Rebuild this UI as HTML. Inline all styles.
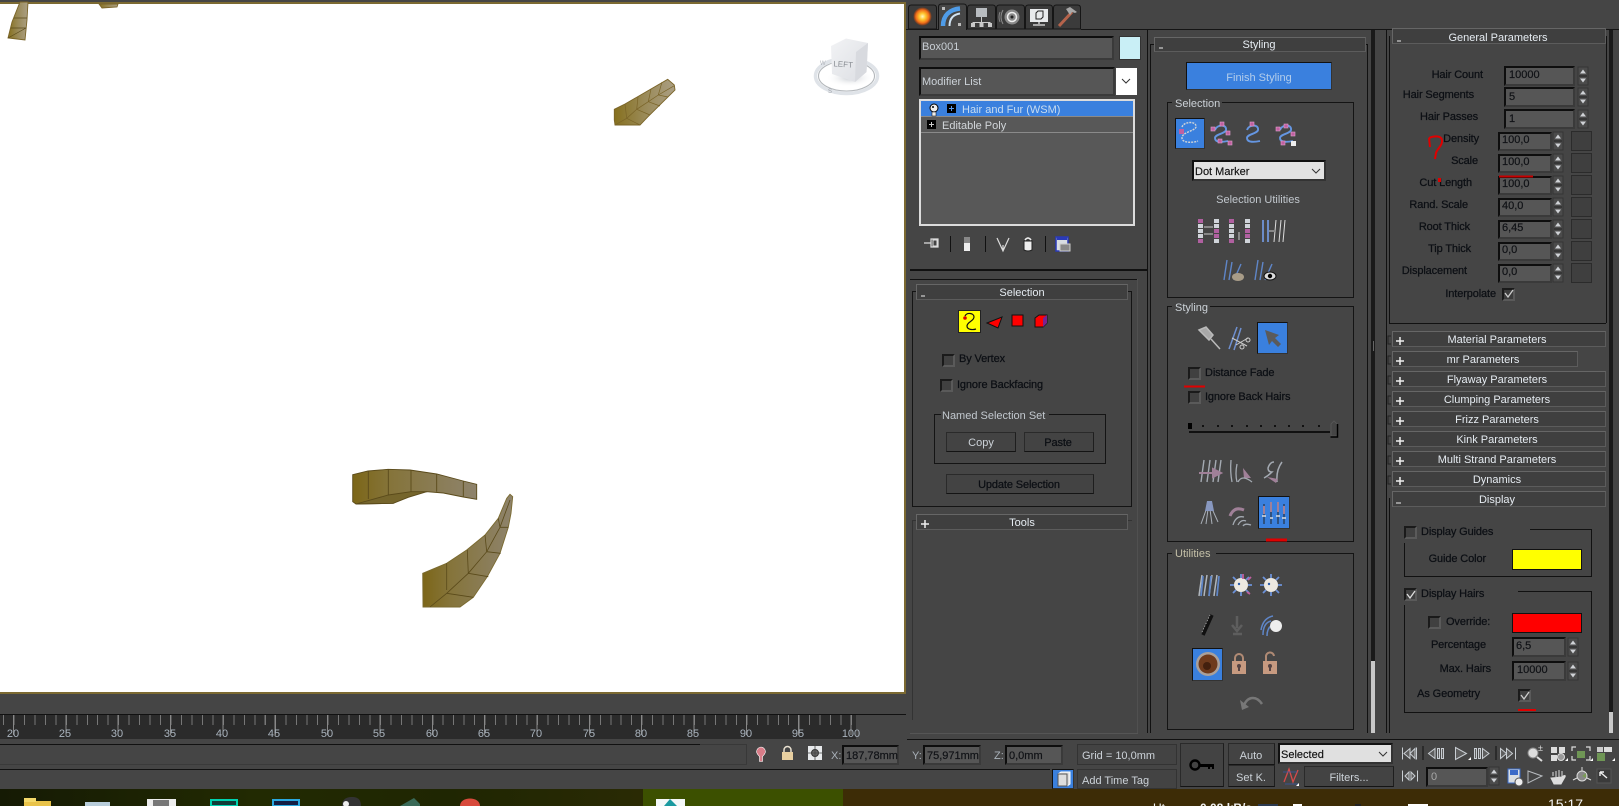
<!DOCTYPE html>
<html><head><meta charset="utf-8"><title>3ds Max</title>
<style>
html,body{margin:0;padding:0;background:#454545;}
#p{position:relative;width:1619px;height:806px;overflow:hidden;background:#454545;font-family:"Liberation Sans",sans-serif;}
#p div{position:absolute;box-sizing:border-box;}
.f{background:#565656;border:2px solid;border-color:#0e0e0e #3a3a3a #3a3a3a #0e0e0e;}
.hd{background:#3f3f3f;border:1px solid #5c5c5c;border-left-color:#666;border-top-color:#666;}
.g{border:1px solid #141414;}
.b{background:#434343;border:1px solid;border-color:#2a2a2a #1e1e1e #141414 #2a2a2a;}
.bt{background:#3f3f3f;border:1px solid #2b2b2b;}
.blue{background:#3a80de;border:1px solid;border-color:#111 #333 #333 #111;}
.ck{width:13px;height:13px;background:#404040;border:2px solid;border-color:#1a1a1a #5a5a5a #5a5a5a #1a1a1a;}
svg{position:absolute;left:0;top:0;}
text{font-family:"Liberation Sans",sans-serif;font-size:11px;}
.d{fill:#0c0f14;stroke:#0c0f14;stroke-width:.25px;letter-spacing:-.12px}
.l{fill:#ccd2d8}.h{fill:#e6ecf2}
.v{fill:#101216;stroke:#101216;stroke-width:.2px}
.e{text-anchor:end}.m{text-anchor:middle}
</style></head><body><div id="p">

<!-- viewport -->
<div style="left:0;top:2px;width:906px;height:692px;background:#fff;border-top:2px solid #7c6a32;border-right:2px solid #7c6a32;border-bottom:2px solid #7c6a32;"></div>

<!-- timeline -->
<div style="left:0;top:714px;width:906px;height:1px;background:#111;"></div>
<div style="left:0;top:715px;width:856px;height:24px;background:#2b2b2b;"></div>
<div style="left:0;top:715px;width:856px;height:10px;background:repeating-linear-gradient(90deg,#777 0,#777 1px,transparent 1px,transparent 10.47px);background-position:3px 0;"></div>
<div style="left:0;top:715px;width:856px;height:20px;background:repeating-linear-gradient(90deg,#888 0,#888 1px,transparent 1px,transparent 52.35px);background-position:13px 0;"></div>

<!-- status bars -->
<div style="left:0;top:744px;width:700px;height:1px;background:#111;"></div>
<div style="left:700px;top:744px;width:47px;height:21px;border:1px solid #383838;border-left:0;"></div>
<div style="left:0;top:764px;width:747px;height:1px;background:#3a3a3a;"></div>
<div style="left:0;top:769px;width:1050px;height:1px;background:#111;"></div>
<div style="left:907px;top:739px;width:712px;height:1px;background:#111;"></div>
<div style="left:910px;top:733px;width:228px;height:1px;background:#555;"></div>
<div class="f" style="left:842px;top:745px;width:57px;height:20px;"></div>
<div class="f" style="left:923px;top:745px;width:58px;height:20px;"></div>
<div class="f" style="left:1005px;top:745px;width:58px;height:20px;"></div>
<div class="b" style="left:1077px;top:744px;width:100px;height:21px;border-color:#333;"></div>
<div class="b" style="left:1077px;top:769px;width:100px;height:20px;border-color:#333;"></div>
<div class="blue" style="left:1052px;top:769px;width:22px;height:20px;"></div>
<div class="b" style="left:1180px;top:743px;width:44px;height:44px;"></div>
<div class="b" style="left:1228px;top:743px;width:47px;height:22px;"></div>
<div class="b" style="left:1228px;top:765px;width:47px;height:22px;"></div>
<div style="left:1278px;top:743px;width:115px;height:21px;background:#e0e0e0;border:2px solid #111;border-right-color:#333;border-bottom-color:#333;"></div>
<div class="b" style="left:1304px;top:766px;width:90px;height:21px;"></div>
<div class="f" style="left:1426px;top:767px;width:62px;height:20px;"></div>

<!-- taskbar -->
<div style="left:0;top:789px;width:643px;height:17px;background:linear-gradient(90deg,#151a04,#222a02 40%,#1f2602 70%,#2a2a04);"></div>
<div style="left:643px;top:789px;width:200px;height:17px;background:#3c5000;"></div>
<div style="left:843px;top:789px;width:776px;height:17px;background:#3d2c06;"></div>

<!-- tab strip line -->
<div style="left:1081px;top:29px;width:538px;height:1px;background:#141414;"></div>
<div style="left:906px;top:29px;width:32px;height:1px;background:#141414;"></div>

<!-- panel 0: name/modifier -->
<div class="f" style="left:919px;top:36px;width:195px;height:24px;"></div>
<div style="left:1119px;top:36px;width:22px;height:24px;background:#c9eff6;border:1px solid #333;"></div>
<div class="f" style="left:919px;top:67px;width:196px;height:29px;"></div>
<div style="left:1116px;top:68px;width:21px;height:27px;background:#fff;"></div>
<div style="left:919px;top:99px;width:216px;height:127px;background:#585858;border:2px solid #dcdcdc;"></div>
<div style="left:921px;top:101px;width:212px;height:16px;background:#3a80de;"></div>
<div style="left:921px;top:116px;width:212px;height:1px;background:#8a8a8a;"></div>
<div style="left:921px;top:132px;width:212px;height:1px;background:#8a8a8a;"></div>
<div style="left:950px;top:236px;width:1px;height:16px;background:#111;"></div>
<div style="left:985px;top:236px;width:1px;height:16px;background:#111;"></div>
<div style="left:1045px;top:236px;width:1px;height:16px;background:#111;"></div>
<div style="left:910px;top:269px;width:237px;height:2px;background:#111;"></div>
<div style="left:910px;top:279px;width:228px;height:1px;background:#111;"></div>
<div style="left:1137px;top:279px;width:1px;height:454px;background:#505050;"></div>

<!-- Selection rollout (left) -->
<div class="g" style="left:912px;top:291px;width:220px;height:216px;"></div>
<div class="hd" style="left:916px;top:284px;width:212px;height:16px;"></div>
<div style="left:958px;top:310px;width:23px;height:23px;background:#ffff00;border:1px solid #222;"></div>
<div class="ck" style="left:942px;top:354px;"></div>
<div class="ck" style="left:940px;top:379px;"></div>
<div class="g" style="left:934px;top:414px;width:172px;height:50px;"></div>
<div style="left:941px;top:410px;width:108px;height:8px;background:#454545;"></div>
<div class="b" style="left:946px;top:432px;width:70px;height:20px;"></div>
<div class="b" style="left:1024px;top:432px;width:70px;height:20px;"></div>
<div class="b" style="left:946px;top:474px;width:148px;height:20px;"></div>
<div class="g" style="left:912px;top:520px;width:220px;height:200px;border-bottom:0;border-right:0;border-color:#333;"></div>
<div class="hd" style="left:916px;top:514px;width:212px;height:16px;"></div>

<!-- panel 2: Styling -->
<div style="left:1147px;top:30px;width:1px;height:703px;background:#111;"></div>
<div style="left:1150px;top:44px;width:1px;height:689px;background:#111;"></div>
<div style="left:1150px;top:44px;width:218px;height:1px;background:#111;"></div>
<div style="left:1367px;top:44px;width:1px;height:689px;background:#111;"></div>
<div class="hd" style="left:1154px;top:37px;width:212px;height:15px;"></div>
<div class="blue" style="left:1186px;top:62px;width:146px;height:28px;"></div>

<div class="g" style="left:1167px;top:102px;width:187px;height:196px;"></div>
<div style="left:1172px;top:98px;width:50px;height:8px;background:#454545;"></div>
<div class="blue" style="left:1175px;top:118px;width:30px;height:31px;"></div>
<div style="left:1192px;top:160px;width:134px;height:21px;background:#e2e2e2;border:2px solid #111;border-right-color:#333;border-bottom-color:#333;"></div>

<div class="g" style="left:1167px;top:306px;width:187px;height:236px;"></div>
<div style="left:1172px;top:302px;width:38px;height:8px;background:#454545;"></div>
<div class="blue" style="left:1257px;top:322px;width:31px;height:32px;"></div>
<div class="ck" style="left:1188px;top:367px;"></div>
<div class="ck" style="left:1188px;top:391px;"></div>
<div class="blue" style="left:1258px;top:496px;width:32px;height:33px;"></div>

<div class="g" style="left:1167px;top:553px;width:187px;height:177px;"></div>
<div style="left:1172px;top:549px;width:44px;height:8px;background:#454545;"></div>
<div class="blue" style="left:1192px;top:648px;width:31px;height:33px;"></div>

<!-- scrollbars -->
<div style="left:1371px;top:30px;width:4px;height:631px;background:#1a1a1a;"></div>
<div style="left:1371px;top:661px;width:4px;height:72px;background:#c8c8c8;"></div>
<div style="left:1609px;top:30px;width:4px;height:682px;background:#1a1a1a;"></div>
<div style="left:1609px;top:712px;width:4px;height:21px;background:#c8c8c8;"></div>

<!-- panel 3 -->
<div style="left:1386px;top:30px;width:1px;height:703px;background:#111;"></div>
<div style="left:1389px;top:36px;width:1px;height:287px;background:#111;"></div>
<div style="left:1389px;top:323px;width:217px;height:1px;background:#111;"></div>
<div style="left:1606px;top:36px;width:1px;height:287px;background:#111;"></div>
<div class="hd" style="left:1392px;top:28px;width:214px;height:16px;"></div>
<div class="f" style="left:1504px;top:66px;width:71px;height:20px;"></div>
<div class="f" style="left:1504px;top:87px;width:71px;height:20px;"></div>
<div class="f" style="left:1504px;top:109px;width:71px;height:20px;"></div>
<div class="f" style="left:1498px;top:132px;width:54px;height:19px;"></div>
<div class="f" style="left:1498px;top:154px;width:54px;height:19px;"></div>
<div class="f" style="left:1498px;top:176px;width:54px;height:19px;"></div>
<div class="f" style="left:1498px;top:198px;width:54px;height:19px;"></div>
<div class="f" style="left:1498px;top:220px;width:54px;height:19px;"></div>
<div class="f" style="left:1498px;top:242px;width:54px;height:19px;"></div>
<div class="f" style="left:1498px;top:264px;width:54px;height:19px;"></div>
<div class="bt" style="left:1571px;top:131px;width:21px;height:20px;"></div>
<div class="bt" style="left:1571px;top:153px;width:21px;height:20px;"></div>
<div class="bt" style="left:1571px;top:175px;width:21px;height:20px;"></div>
<div class="bt" style="left:1571px;top:197px;width:21px;height:20px;"></div>
<div class="bt" style="left:1571px;top:219px;width:21px;height:20px;"></div>
<div class="bt" style="left:1571px;top:241px;width:21px;height:20px;"></div>
<div class="bt" style="left:1571px;top:263px;width:21px;height:20px;"></div>
<div class="ck" style="left:1502px;top:288px;background:#3c3c3c;"></div>

<div class="hd" style="left:1392px;top:331px;width:214px;height:16px;"></div>
<div class="hd" style="left:1392px;top:351px;width:186px;height:16px;"></div>
<div class="hd" style="left:1392px;top:371px;width:214px;height:16px;"></div>
<div class="hd" style="left:1392px;top:391px;width:214px;height:16px;"></div>
<div class="hd" style="left:1392px;top:411px;width:214px;height:16px;"></div>
<div class="hd" style="left:1392px;top:431px;width:214px;height:16px;"></div>
<div class="hd" style="left:1392px;top:451px;width:214px;height:16px;"></div>
<div class="hd" style="left:1392px;top:471px;width:214px;height:16px;"></div>
<div class="hd" style="left:1392px;top:491px;width:214px;height:16px;"></div>
<div style="left:1389px;top:498px;width:1px;height:235px;background:#111;"></div>

<div class="ck" style="left:1404px;top:526px;"></div>
<div style="left:1530px;top:529px;width:62px;height:1px;background:#111;"></div>
<div style="left:1404px;top:543px;width:1px;height:34px;background:#111;"></div>
<div style="left:1404px;top:576px;width:188px;height:1px;background:#111;"></div>
<div style="left:1591px;top:529px;width:1px;height:48px;background:#111;"></div>
<div style="left:1512px;top:549px;width:70px;height:21px;background:#ffff00;border:1px solid #111;"></div>
<div class="ck" style="left:1404px;top:588px;"></div>
<div style="left:1518px;top:591px;width:74px;height:1px;background:#111;"></div>
<div style="left:1404px;top:605px;width:1px;height:107px;background:#111;"></div>
<div style="left:1404px;top:712px;width:188px;height:1px;background:#111;"></div>
<div style="left:1591px;top:591px;width:1px;height:122px;background:#111;"></div>
<div class="ck" style="left:1428px;top:616px;"></div>
<div style="left:1512px;top:613px;width:70px;height:20px;background:#ff0000;border:1px solid #111;"></div>
<div class="f" style="left:1512px;top:637px;width:54px;height:20px;"></div>
<div class="f" style="left:1512px;top:661px;width:54px;height:20px;"></div>
<div class="ck" style="left:1518px;top:689px;"></div>

<svg width="1619" height="806" viewBox="0 0 1619 806">
<defs>
<linearGradient id="lf" x1="0" x2="1" y1="0" y2="0"><stop offset="0" stop-color="#7c6618"/><stop offset=".3" stop-color="#85743a"/><stop offset="1" stop-color="#8e836c"/></linearGradient>
<linearGradient id="lf3" x1="0" x2="1" y1="0" y2="0"><stop offset="0" stop-color="#86701e"/><stop offset=".5" stop-color="#9a8a58"/><stop offset="1" stop-color="#ab9f84"/></linearGradient>
<radialGradient id="sun"><stop offset="0" stop-color="#fff6c0"/><stop offset=".35" stop-color="#ffc830"/><stop offset=".75" stop-color="#ee6a18"/><stop offset="1" stop-color="#b0400c" stop-opacity=".4"/></radialGradient>
<radialGradient id="shd"><stop offset="0" stop-color="#c8ccd2"/><stop offset="1" stop-color="#fff" stop-opacity="0"/></radialGradient>
<linearGradient id="cb" x1="0" x2="1" y1="0" y2="1"><stop offset="0" stop-color="#f2f3f5"/><stop offset="1" stop-color="#dcdee3"/></linearGradient>
<g id="sp"><rect width="10" height="18" fill="#4b4b4b" stroke="#353535"/><path d="M5 2.500l3 4H2zM5 15.500l3-4H2z" fill="#cfd2d6"/><rect x="1" y="8.500" width="8" height="1" fill="#222"/></g>
<g id="hs" fill="none"><path d="M4 6C6 0 16 0 15 6 14 10 4 10 4 14 4 19 12 18 17 17" stroke="#6596e2" stroke-width="1.9"/></g>
<g id="lock"><path d="M3 7V4a4 4 0 0 1 8 0v3" fill="none" stroke="#b08a74" stroke-width="2"/><rect x="0" y="7" width="14" height="13" fill="#c79a80"/><circle cx="7" cy="12" r="2" fill="#544"/><rect x="6" y="12" width="2" height="5" fill="#544"/></g>
<g id="hair" fill="none" stroke="#b0b6bd" stroke-width="1.5"><path d="M3 22C4 14 5 8 6 1M8 22C9 14 10 8 11 1M13 22C14 14 15 8 16 1M18 22C19 14 20 8 21 1"/></g>
<g id="ball"><circle cx="11" cy="11" r="7" fill="#ece8e0"/><circle cx="9" cy="10" r="1.2" fill="#2a5aa8"/><path d="M11 0v4M11 18v4M0 11h4M18 11h4M3 3l3 3M19 3l-3 3M3 19l3-3M19 19l-3-3" stroke="#6c92d8" stroke-width="1.8"/></g>
</defs>

<!-- leaves -->
<g stroke="#5a4a1a" stroke-width=".9" fill="none">
<path d="M352.700 474.700L368 471 388 469.300 410 470 436.700 474 463.300 481 476.700 484.300V499.300L463.300 497 443.300 493 426.700 491.700 410 494 393.300 503.300 356 504 352.700 501.700Z" fill="url(#lf)"/>
<path d="M356 504L388.300 495 411 491.700 426.700 491.700 408.300 497.300 393.300 503.300Z" fill="#75652c"/>
<path d="M368.300 471V499M388.300 469.300V495M411 470V491.700M436.700 474V491.700M463.300 481V496.700"/>
<path d="M422.700 573.300L446.700 563.300 466.700 550 485 535 498.300 518.300 506.700 498.300 510 494.300 512.700 496.700 511 513.300 508.300 527.300 500 553.300 487.300 576.700 473.300 597.300 460 607H423Z" fill="url(#lf)" stroke="#7a6a30"/>
<path d="M446.700 563.300V590M467.300 550L468.300 573.300M485 535L486.700 551.700M498.300 518.300L500 527.300M468.300 573.300L488.300 576.700M486.700 551.700L500.700 553.300M500 527.300L508.300 527.300M446.700 593.300L473.300 597.300M510 500L500 527.300 486.700 551.700 468.300 573.300 446.700 593.300 430 607" stroke-width=".8"/>
<path d="M614.300 109.300L625 104 667.700 79.300 674.300 85 675 90 648 116.700 640 125H615L614.300 120Z" fill="url(#lf3)" stroke="#7a6428"/>
<path d="M615 125L626.700 118.300 636.700 109.300 648.300 101.700 658.300 95 674.300 85.700M625 104L626.700 118.300 640 125M638 97L636.700 109.300 650 115M651 89L648.300 101.700 660 106M662 82L658.300 95 668 97" stroke="#7a6428" stroke-width=".7"/>
<path d="M8 38L12 22 20 2H28L27 20 25 40Z" fill="url(#lf3)" stroke="#7a6428"/>
<path d="M11 28H26M14 18H27M8 38L26 28" stroke-width=".7"/>
<path d="M99 4H118L117 7 102 8Z" fill="url(#lf3)" stroke="#7a6428"/>
</g>

<!-- viewcube -->
<ellipse cx="846.500" cy="76" rx="31" ry="17.500" fill="none" stroke="#dfe3e8" stroke-width="3.500"/>
<ellipse cx="846.500" cy="76" rx="28" ry="15" fill="none" stroke="#b4b8bc" stroke-width="1.100"/>
<ellipse cx="850" cy="78" rx="24" ry="9" fill="url(#shd)"/>
<path d="M831 46L846 38.500 868 43 866.500 72 855 82 832 74Z" fill="url(#cb)"/>
<path d="M855 82L866.500 72 868 43 856 52Z" fill="#d8dadf"/>
<text x="843" y="67" class="m" style="font-size:8px;fill:#8a8e94" transform="rotate(4 843 67)">LEFT</text>
<text x="820" y="65" style="font-size:6px;fill:#b0b4ba">W</text>
<text x="828" y="93" style="font-size:6px;fill:#a0a4aa">S</text>

<!-- timeline labels -->
<g style="fill:#a9b3bd">
<text class="m" x="13" y="737">20</text><text class="m" x="65" y="737">25</text><text class="m" x="117" y="737">30</text><text class="m" x="170" y="737">35</text><text class="m" x="222" y="737">40</text><text class="m" x="274" y="737">45</text><text class="m" x="327" y="737">50</text><text class="m" x="379" y="737">55</text><text class="m" x="432" y="737">60</text><text class="m" x="484" y="737">65</text><text class="m" x="536" y="737">70</text><text class="m" x="589" y="737">75</text><text class="m" x="641" y="737">80</text><text class="m" x="693" y="737">85</text><text class="m" x="746" y="737">90</text><text class="m" x="798" y="737">95</text><text class="m" x="851" y="737">100</text>
</g>

<!-- status icons -->
<path d="M761 747a5 5 0 0 1 4.500 4.500c0 2-2 4-3 5v5h-3v-5c-1-1-3-3-3-5a5 5 0 0 1 4.500-4.500z" fill="#d87c88" stroke="#fff" stroke-width=".6"/>
<path d="M784 752v-2a3.500 3.500 0 0 1 7 0v2" fill="none" stroke="#e8e0d0" stroke-width="1.500"/><rect x="782" y="752" width="11" height="8" fill="#e8cfa0"/>
<rect x="808" y="746" width="14" height="14" fill="#e8eaec"/><circle cx="815" cy="753" r="3.500" fill="#666" stroke="#333"/><path d="M815 746v14M808 753h14" stroke="#444" stroke-width=".8"/>
<text x="831" y="759" style="fill:#aab2ba">X:</text><text x="912" y="759" style="fill:#aab2ba">Y:</text><text x="994" y="759" style="fill:#aab2ba">Z:</text>
<text x="846" y="759" class="v">187,78mm</text><text x="927" y="759" class="v">75,971mm</text><text x="1009" y="759" class="v">0,0mm</text>
<text x="1082" y="759" class="l">Grid = 10,0mm</text>
<text x="1082" y="784" class="l">Add Time Tag</text>
<path d="M1058 774l3-2h9v12l-3 2h-9z" fill="#ddd" stroke="#fff"/><rect x="1058" y="774" width="9" height="12" fill="none" stroke="#555"/>
<circle cx="1195" cy="765" r="4.500" fill="none" stroke="#000" stroke-width="2.400"/><path d="M1199 764h15v5h-2v-2h-2v2h-2v-2h-9z" fill="#000"/>
<text x="1251" y="759" class="l m">Auto</text><text x="1251" y="781" class="l m">Set K.</text>
<text x="1281" y="758" style="fill:#111;stroke:#111;stroke-width:.15px">Selected</text><path d="M1379 752l4 4 4-4" fill="none" stroke="#333"/>
<text x="1349" y="781" class="l m">Filters...</text>
<path d="M1284 782L1289 769 1293 782 1298 770" fill="none" stroke="#d54a4a" stroke-width="1.300"/><path d="M1283 772h14M1285 784h13" stroke="#3a5aa8" stroke-width=".8"/><path d="M1296 786l3-3v3z" fill="#fff"/>

<!-- transport -->
<g fill="#5e5e5e" stroke="#c9ced3" stroke-width="1">
<path d="M1402.500 747.500v12M1416.500 747.500v12" fill="none"/>
<path d="M1410 748.500l-6 5 6 5zM1415 748.500l-5 5 5 5z"/>
<path d="M1435 748.500l-6.500 5 6.500 5zM1437.500 748.500h2v10h-2zM1441.500 748.500h2v10h-2z"/>
<path d="M1455.500 747.500l11 6-11 6z"/>
<path d="M1474.500 748.500h2v10h-2zM1478.500 748.500h2v10h-2zM1482.500 748.500l6.500 5-6.500 5z"/>
<path d="M1500.500 748.500l6 5-6 5zM1506.500 748.500l6 5-6 5zM1515.500 747.500v12" />
<path d="M1402.500 770.500v11M1417.500 770.500v11" fill="none"/>
<path d="M1405 776l4-4v8zM1415 776l-4-4v8z"/>
</g>
<path d="M1423 746v14M1496 746v14" stroke="#111"/>
<path d="M1468 760l3-3v3zM1565 761l3-3v3zM1590 761l3-3v3zM1612 761l3-3v3z" fill="#fff"/>
<text x="1431" y="780" style="fill:#a8a8a8">0</text>
<use href="#sp" x="1489" y="767"/>
<circle cx="1533" cy="753" r="5" fill="#ddd" stroke="#888"/><path d="M1537 757l5 4" stroke="#ddd" stroke-width="2"/><text x="1538" y="751" style="font-size:9px;fill:#ddd">±</text>
<rect x="1551" y="747" width="6" height="6" fill="#ddd"/><rect x="1559" y="747" width="6" height="6" fill="#ddd"/><rect x="1551" y="755" width="6" height="6" fill="#ddd"/><circle cx="1561" cy="757" r="3.500" fill="#999" stroke="#ddd"/>
<path d="M1572 751v-4h4M1586 747h4v4M1590 756v4h-4M1576 760h-4v-4" fill="none" stroke="#ddd" stroke-width="1.200"/><rect x="1577" y="751" width="8" height="7" fill="#6f9655"/>
<rect x="1597" y="753" width="8" height="8" fill="#6f9655"/><rect x="1604" y="747" width="8" height="5" fill="#ddd"/><rect x="1597" y="747" width="6" height="5" fill="#ccc"/>
<rect x="1508" y="769" width="12" height="14" fill="#d8dde2" stroke="#3a6ac8"/><rect x="1510" y="770" width="8" height="5" fill="#3a6ac8"/><circle cx="1519" cy="782" r="4" fill="#eee" stroke="#555"/>
<path d="M1528 771L1542 776 1528 783Z" fill="none" stroke="#b8bcc0"/>
<path d="M1553 776v-4m3 5v-6m3 6v-7m3 7v-6m0 6c2-2 4-2 3 0l-4 7h-7l-3-6z" fill="#ddd" stroke="#ddd"/>
<circle cx="1582" cy="776" r="5" fill="#888" stroke="#ddd"/><path d="M1582 776l4-3v5z" fill="#7a9c55"/><path d="M1582 767v4M1573 780l4-2M1591 780l-4-2" stroke="#ddd"/>
<rect x="1597" y="769" width="14" height="14" fill="#3a3a3a" stroke="#555"/><path d="M1600 772l7 6M1600 772h4M1600 772v4" stroke="#eee" stroke-width="1.400" fill="none"/>

<!-- taskbar icons -->
<rect x="24" y="801" width="27" height="5" fill="#e9c34a"/><rect x="24" y="798" width="12" height="4" fill="#f3d86a"/>
<rect x="85" y="802" width="25" height="4" fill="#b8cdda"/>
<rect x="147" y="799" width="29" height="7" fill="#ededed"/><rect x="153" y="800" width="16" height="6" fill="#777"/>
<rect x="211" y="800" width="26" height="6" fill="#113c38" stroke="#00d2b0" stroke-width="2"/>
<rect x="273" y="800" width="26" height="6" fill="#141e44" stroke="#2aa8e0" stroke-width="2"/>
<path d="M342 806c0-8 6-9 10-9s9 1 9 9z" fill="#333"/><circle cx="346" cy="804" r="3" fill="#eee"/>
<path d="M400 806l14-8 6 6v2z" fill="#3a6a58"/>
<path d="M460 806c0-10 20-10 20 0z" fill="#d84a3c"/>
<rect x="656" y="799" width="29" height="7" fill="#f4f8f8"/><path d="M664 806l6-7 7 7z" fill="#1a9aa0"/>
<g style="fill:#f2f2f2">
<text x="1153" y="812" style="font-size:12px;">Ut</text>
<text x="1200" y="812" style="font-size:12px;font-weight:bold;">0,08 kB/s</text>
<text x="1548" y="809" style="font-size:14px;">15:17</text>
</g>
<rect x="1258" y="804" width="20" height="2" fill="#2c3a50"/><rect x="1293" y="804" width="9" height="2" fill="#fff"/><rect x="1355" y="804" width="6" height="2" fill="#222"/><rect x="1408" y="804" width="20" height="2" fill="#fff"/>

<!-- tabs -->
<g stroke="#161616" stroke-width="1" fill="#3b3b3b">
<path d="M908.500 29V8q0-3 3-3h22q3 0 3 3v21z"/>
<path d="M967.500 29V8q0-3 3-3h22q3 0 3 3v21z"/>
<path d="M996.500 29V8q0-3 3-3h22q3 0 3 3v21z"/>
<path d="M1025.500 29V8q0-3 3-3h21q3 0 3 3v21z"/>
<path d="M1053.500 29V8q0-3 3-3h21q3 0 3 3v21z"/>
<path d="M938.500 30V7q0-3 3-3h22q3 0 3 3v23" fill="#464646"/>
</g>
<circle cx="922.500" cy="16.500" r="9" fill="url(#sun)"/>
<path d="M943 26C943 15 950 9.500 960 8.500" fill="none" stroke="#4f9ce8" stroke-width="4.500"/><path d="M949.500 26C949.500 18.500 953 14.500 960 13.500" fill="none" stroke="#d0e2f2" stroke-width="2"/>
<rect x="942" y="7" width="3" height="3" fill="#bbb"/><rect x="958" y="23" width="3" height="3" fill="#bbb"/>
<rect x="976" y="8" width="11" height="9" fill="#b8bcc0"/><path d="M981.500 17v5M973 22.500h17M973 22v3M990 22v3M981.500 22v3" stroke="#ccc" fill="none"/><rect x="971" y="23" width="4" height="4" fill="#c8c8c8"/><rect x="979.500" y="23" width="4" height="4" fill="#c8c8c8"/><rect x="988" y="23" width="4" height="4" fill="#c8c8c8"/>
<circle cx="1012" cy="17" r="7.500" fill="#8a8a8a"/><circle cx="1012" cy="17" r="4.500" fill="none" stroke="#eee" stroke-width="1.500"/><circle cx="1012" cy="17" r="1.500" fill="#222"/><path d="M1003 10q-4 7 0 14M1000 12q-2 5 0 10" fill="none" stroke="#888"/>
<rect x="1030" y="9" width="18" height="13" fill="#e8eaec"/><path d="M1036 13l2-2h5v6l-2 2h-5z" fill="none" stroke="#222"/><path d="M1039 22v2M1033 25h12" stroke="#ccc" stroke-width="1.500"/>
<path d="M1059 26L1072 12" stroke="#b5634b" stroke-width="3"/><path d="M1066 9l4-2 7 5-2 1-3-1-2 3z" fill="#a8a8a8"/>

<text x="922" y="50" style="fill:#c8ced4">Box001</text>
<text x="922" y="85" class="l">Modifier List</text>
<path d="M1122 79l4 4 4-4" fill="none" stroke="#333"/>

<!-- stack -->
<circle cx="934" cy="108" r="4" fill="#eee" stroke="#000"/><rect x="932" y="112" width="4" height="4" fill="#eee" stroke="#000" stroke-width=".5"/><circle cx="933" cy="107" r="1" fill="#000"/>
<rect x="947" y="104" width="9" height="9" fill="#000"/><path d="M949 108.500h5M951.500 106v5" stroke="#5a9aee"/>
<text x="962" y="113" style="fill:#c8dcf0">Hair and Fur (WSM)</text>
<rect x="927" y="120" width="9" height="9" fill="#000"/><path d="M929 124.500h5M931.500 122v5" stroke="#ccc"/>
<text x="942" y="129" style="fill:#d2d6da">Editable Poly</text>

<!-- stack tool icons -->
<path d="M924 243h7M931 239v8h7v-8z" fill="none" stroke="#ddd" stroke-width="1.200"/><path d="M933 240h4v6h-4z" fill="#444" stroke="#ddd"/>
<rect x="964" y="237" width="6" height="14" fill="#eee"/><rect x="964" y="237" width="6" height="6" fill="#888"/>
<path d="M997 238l6 13 6-13M1003 251v-6" fill="none" stroke="#ddd" stroke-width="1.200"/>
<path d="M1024 241h8v9q-4 2-8 0z" fill="#eee" stroke="#222"/><path d="M1025 240q3-4 6 0" fill="none" stroke="#eee" stroke-width="1.500"/>
<rect x="1056" y="237" width="12" height="14" fill="#d8dde2" stroke="#2a3ab8" stroke-width="1.500"/><rect x="1057" y="237" width="10" height="3" fill="#2a3ab8"/><rect x="1060" y="244" width="10" height="7" fill="#888" stroke="#ccc"/>

<!-- Selection rollout text -->
<text x="1022" y="296" class="h m">Selection</text>
<path d="M921 296h4" stroke="#eee" stroke-width="1"/>
<path d="M965 316c2-4 9-3 9 1s-7 5-7 9 6 4 9 3" fill="none" stroke="#111" stroke-width="1.200"/><circle cx="965" cy="318" r="1.800" fill="#d00"/>
<path d="M987 323l15-6-4 11z" fill="#ff0000" stroke="#111"/>
<rect x="1012" y="315" width="11" height="11" fill="#ff0000" stroke="#111"/>
<path d="M1035 318l4-3h8v8l-4 4h-8z" fill="#ff0000" stroke="#111"/><path d="M1043 318l4-3v8l-4 4z" fill="#7a2290"/>
<text x="959" y="362" class="d">By Vertex</text>
<text x="957" y="388" class="d">Ignore Backfacing</text>
<text x="942" y="419" style="fill:#c2c8ce">Named Selection Set</text>
<text x="981" y="446" class="l m">Copy</text>
<text x="1058" y="446" class="d m">Paste</text>
<text x="1019" y="488" class="d m">Update Selection</text>
<text x="1022" y="526" class="h m">Tools</text>
<path d="M921 524h8M925 520v8" stroke="#eee" stroke-width="1.500"/>

<!-- Styling panel text -->
<text x="1259" y="48" class="h m">Styling</text>
<path d="M1159 48h4" stroke="#eee"/>
<text x="1259" y="81" class="m" style="fill:#b3cdeb">Finish Styling</text>
<text x="1175" y="107" class="l">Selection</text>
<path d="M1182 127C1184 121 1197 121 1196 127 1195 131 1182 132 1182 138 1182 143 1192 143 1198 141" fill="none" stroke="#d0d4d8" stroke-width="1.400" stroke-dasharray="2 1"/>
<rect x="1179" y="129" width="5" height="5" fill="#c060a0"/>
<use href="#hs" x="1211" y="124"/><use href="#hs" x="1243" y="124"/><use href="#hs" x="1276" y="124"/>
<g fill="#c060a0" stroke="#e0a0d0" stroke-width=".6">
<rect x="1211" y="127" width="4" height="4"/><rect x="1220" y="122" width="4" height="4"/><rect x="1226" y="131" width="4" height="4"/><rect x="1218" y="139" width="4" height="4"/><rect x="1228" y="141" width="4" height="4"/>
<rect x="1250" y="122" width="4" height="4"/>
<rect x="1276" y="127" width="4" height="4"/><rect x="1284" y="124" width="4" height="4"/><rect x="1291" y="132" width="4" height="4"/><rect x="1281" y="141" width="4" height="4"/>
</g>
<rect x="1291" y="141" width="5" height="5" fill="#eee"/>
<text x="1195" y="175" style="fill:#111;stroke:#111;stroke-width:.15px">Dot Marker</text>
<path d="M1312 169l4 4 4-4" fill="none" stroke="#333"/>
<text x="1258" y="203" class="m" style="fill:#c2c8ce">Selection Utilities</text>
<!-- utilities icons -->
<g fill="none" stroke-width="5" stroke-dasharray="4 1">
<path d="M1200.500 219v24M1216.500 219v24M1231.500 219v24M1247.500 219v24" stroke="#d0d4da"/>
<path d="M1200.500 219v5M1200.500 239v5M1216.500 229v10M1231.500 219v5M1231.500 239v5M1247.500 229v10" stroke="#b060a0"/>
</g>
<path d="M1204 227h9M1204 234h9M1239 240v-8" stroke="#888" stroke-width="2"/>
<path d="M1263 220v22M1268 220v22" stroke="#6c8cc8" stroke-width="2"/><path d="M1276 220l-2 22M1281 220l-2 22M1285 220l-2 22" stroke="#ddd" stroke-width="1"/><path d="M1269 231h6" stroke="#888" stroke-width="2"/>
<path d="M1224 280l3-20M1229 280l3-18M1234 280l7-16" fill="none" stroke="#5f86c8" stroke-width="1.400"/><ellipse cx="1238" cy="277" rx="6" ry="4" fill="#a89c88"/>
<path d="M1255 280l3-20M1260 280l3-18M1265 280l7-16" fill="none" stroke="#5f86c8" stroke-width="1.400"/><ellipse cx="1270" cy="276" rx="6" ry="4" fill="#ddd" stroke="#111"/><circle cx="1270" cy="276" r="2.200" fill="#000"/>

<text x="1175" y="311" class="l">Styling</text>
<path d="M1199 330l7-3 7 8-4 5zM1211 339l9 10" fill="#a8a8a8" stroke="#bbb" stroke-width="1.500"/>
<path d="M1229 349l8-22M1234 350l7-22" stroke="#6f90d0" stroke-width="1.500"/><path d="M1232 338l15 8M1236 345l12-7" stroke="#ccc"/><circle cx="1248" cy="340" r="2" fill="none" stroke="#ccc"/><circle cx="1242" cy="347" r="2" fill="none" stroke="#ccc"/>
<path d="M1265 330l14 5-4 3 6 6-3 3-6-6-3 4z" fill="#5a5a5a"/>
<text x="1205" y="376" class="d">Distance Fade</text>
<text x="1205" y="400" class="d">Ignore Back Hairs</text>
<path d="M1184 386.500h21" stroke="#e00000" stroke-width="2"/>
<!-- slider -->
<rect x="1188" y="423" width="4" height="6" fill="#000"/>
<g fill="#111"><rect x="1202" y="425" width="2" height="2"/><rect x="1217" y="425" width="2" height="2"/><rect x="1231" y="425" width="2" height="2"/><rect x="1246" y="425" width="2" height="2"/><rect x="1260" y="425" width="2" height="2"/><rect x="1274" y="425" width="2" height="2"/><rect x="1288" y="425" width="2" height="2"/><rect x="1302" y="425" width="2" height="2"/><rect x="1318" y="425" width="2" height="2"/></g>
<path d="M1189 432h141" stroke="#111" stroke-width="2" fill="none"/>
<path d="M1331 436v-12l3-3 3 3v12z" fill="#454545" stroke="#555"/><path d="M1337.500 424v13h-7" fill="none" stroke="#000" stroke-width="1.500"/>
<!-- style tools -->
<path d="M1201 482l3-22M1207 482l3-22M1213 482l3-22M1218 482l3-22" stroke="#a4aab2" stroke-width="1.400"/><path d="M1199 473h16M1213 469l8 4-8 4z" fill="#a08098" stroke="#a08098" stroke-width="2"/>
<path d="M1231 460q-1 12 1 22M1237 464q-2 10 0 18" fill="none" stroke="#a4aab2" stroke-width="1.300"/><path d="M1243 468l8 10-7 0z" fill="#a08098"/><path d="M1238 482q4-8 14 0" fill="none" stroke="#a4aab2" stroke-width="1.300"/>
<path d="M1282 462q-6 8-5 20M1274 462q-4 0-6 6 0 4 4 4-4 4-8 6" fill="none" stroke="#a4aab2" stroke-width="1.500"/><path d="M1267 477l9 6 2-4z" fill="#a08098"/>
<path d="M1209 502l-8 22M1209 502l-3 22M1209 502l3 22M1209 502l9 20" fill="none" stroke="#aab0b8"/><path d="M1207 501h5l2 10h-9z" fill="#8898c0"/>
<path d="M1230 516q4-10 14-6" fill="none" stroke="#a08098" stroke-width="3"/><path d="M1233 525q3-10 11-8M1238 525q3-6 8-4M1243 526q2-3 8-1" fill="none" stroke="#a4aab2" stroke-width="1.300"/>
<path d="M1264 504v20M1271 504v20M1278 504v20M1284 504v20" stroke="#222"/><path d="M1264 506v8M1271 502v10M1278 502v10M1284 506v8" stroke="#a08098" stroke-width="2"/><path d="M1262 516h4M1270 518h3M1276 516h4M1282 518h4" stroke="#ddd" stroke-width="1.500"/>
<path d="M1266 540h21" stroke="#e00000" stroke-width="3"/>

<text x="1175" y="557" style="fill:#c4c0a8">Utilities</text>
<use href="#hair" x="1196" y="574"/><path d="M1201 596l2-20M1209 596l2-20M1217 596l2-20" stroke="#5f86c8" stroke-width="1.700"/>
<use href="#ball" x="1230" y="574"/><path d="M1243 574v5M1248 580l3-3M1247 592l3 2" stroke="#c060a0" stroke-width="1.800"/>
<use href="#ball" x="1260" y="574"/>
<path d="M1203 635l9-20" stroke="#111" stroke-width="3.500"/><path d="M1202 632l8-17" stroke="#ddd" stroke-width=".7" stroke-dasharray="1 2"/>
<path d="M1237 616v12M1232 625l5 6 5-6M1233 634h9" stroke="#5e5e5e" stroke-width="2.500" fill="none"/>
<path d="M1263 635q0-12 8-14M1267 636q0-10 8-12M1261 630q2-12 12-14" fill="none" stroke="#5f86c8" stroke-width="1.500"/><circle cx="1276" cy="626" r="6" fill="#eee"/>
<circle cx="1208" cy="664" r="12" fill="#aaa09a"/><circle cx="1208" cy="664" r="9.500" fill="#6e3a1c"/><circle cx="1207" cy="666" r="4" fill="#43200e"/>
<use href="#lock" x="1232" y="654"/>
<path d="M1266 662v-5a4 4 0 0 1 8-1" fill="none" stroke="#b08a74" stroke-width="2"/><rect x="1263" y="661" width="14" height="13" fill="#c79a80"/><circle cx="1270" cy="666" r="2" fill="#544"/><rect x="1269" y="666" width="2" height="5" fill="#544"/>
<path d="M1243 708q3-10 10-10 5 0 9 6" fill="none" stroke="#777" stroke-width="2.500"/><path d="M1240 700l2 10 7-3z" fill="#777"/>

<!-- General parameters -->
<text x="1498" y="41" class="h m">General Parameters</text>
<path d="M1397 41h4" stroke="#eee"/>
<text x="1483" y="78" class="d e">Hair Count</text>
<text x="1474" y="98" class="d e">Hair Segments</text>
<text x="1478" y="120" class="d e">Hair Passes</text>
<text x="1479" y="142" class="d e">Density</text>
<text x="1478" y="164" class="d e">Scale</text>
<text x="1472" y="186" class="d e">Cut Length</text>
<text x="1468" y="208" class="d e">Rand. Scale</text>
<text x="1470" y="230" class="d e">Root Thick</text>
<text x="1471" y="252" class="d e">Tip Thick</text>
<text x="1467" y="274" class="d e">Displacement</text>
<text x="1496" y="297" class="d e">Interpolate</text>
<text x="1509" y="78" class="v">10000</text><text x="1509" y="100" class="v">5</text><text x="1509" y="122" class="v">1</text>
<text x="1502" y="143" class="v">100,0</text><text x="1502" y="165" class="v">100,0</text><text x="1502" y="187" class="v">100,0</text><text x="1502" y="209" class="v">40,0</text><text x="1502" y="231" class="v">6,45</text><text x="1502" y="253" class="v">0,0</text><text x="1502" y="275" class="v">0,0</text>
<use href="#sp" x="1578" y="67"/><use href="#sp" x="1578" y="88"/><use href="#sp" x="1578" y="110"/>
<use href="#sp" x="1553" y="132"/><use href="#sp" x="1553" y="154"/><use href="#sp" x="1553" y="176"/><use href="#sp" x="1553" y="198"/><use href="#sp" x="1553" y="220"/><use href="#sp" x="1553" y="242"/><use href="#sp" x="1553" y="264"/>
<path d="M1505 293l3 4 5-7" fill="none" stroke="#ccc" stroke-width="1.300"/>
<path d="M1429 138c4-2 12-3 13 2s-5 9-6 13l-1 6" fill="none" stroke="#e00000" stroke-width="2"/><path d="M1429 138l1 9" stroke="#e00000" stroke-width="2"/><rect x="1438" y="178" width="3" height="4" fill="#e00000"/>
<path d="M1499 176.500h34" stroke="#c80000" stroke-width="2"/>

<!-- rollout bars -->
<text x="1497" y="343" class="h m">Material Parameters</text>
<text x="1483" y="363" class="h m">mr Parameters</text>
<text x="1497" y="383" class="h m">Flyaway Parameters</text>
<text x="1497" y="403" class="h m">Clumping Parameters</text>
<text x="1497" y="423" class="h m">Frizz Parameters</text>
<text x="1497" y="443" class="h m">Kink Parameters</text>
<text x="1497" y="463" class="h m">Multi Strand Parameters</text>
<text x="1497" y="483" class="h m">Dynamics</text>
<text x="1497" y="503" class="h m">Display</text>
<g stroke="#eee" stroke-width="1.500">
<path d="M1396 341h8M1400 337v8M1396 361h8M1400 357v8M1396 381h8M1400 377v8M1396 401h8M1400 397v8M1396 421h8M1400 417v8M1396 441h8M1400 437v8M1396 461h8M1400 457v8M1396 481h8M1400 477v8"/>
</g>
<path d="M1396 503h5" stroke="#eee"/>
<g stroke="#222" fill="none"><path d="M1391 336h-3v8h3M1391 356h-3v8h3M1391 376h-3v8h3M1391 396h-3v8h3M1391 416h-3v8h3M1391 436h-3v8h3M1391 456h-3v8h3M1391 476h-3v8h3"/></g>
<rect x="1373" y="341" width="1" height="10" fill="#666"/>

<!-- Display -->
<text x="1421" y="535" class="d">Display Guides</text>
<text x="1486" y="562" class="d e">Guide Color</text>
<text x="1421" y="597" class="d">Display Hairs</text>
<path d="M1407 594l3 4 5-7" fill="none" stroke="#ddd" stroke-width="1.300"/>
<text x="1446" y="625" class="d">Override:</text>
<text x="1486" y="648" class="d e">Percentage</text>
<text x="1491" y="672" class="d e">Max. Hairs</text>
<text x="1480" y="697" class="d e">As Geometry</text>
<text x="1516" y="649" class="v">6,5</text>
<text x="1517" y="673" class="v">10000</text>
<use href="#sp" x="1568" y="638"/><use href="#sp" x="1568" y="662"/>
<path d="M1521 695l3 4 5-7" fill="none" stroke="#ccc" stroke-width="1.300"/>
<path d="M1518 710h18" stroke="#e00000" stroke-width="2"/>
</svg>
</div></body></html>
